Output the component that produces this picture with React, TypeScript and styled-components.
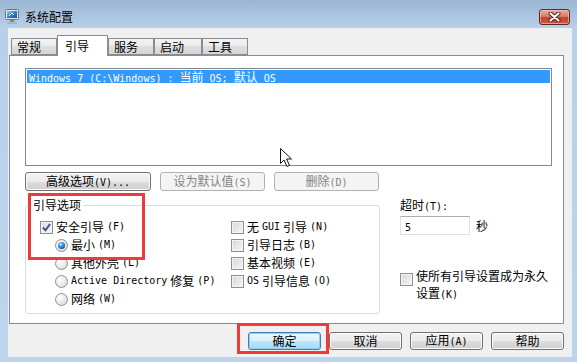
import React from 'react';
import styled, { createGlobalStyle } from 'styled-components';

const GlobalStyle = createGlobalStyle`
  html, body {
    margin: 0;
    padding: 0;
    background: #bdd4ec;
  }
  body {
    font-family: "Noto Sans CJK SC", sans-serif;
    font-size: 12px;
    color: #000;
  }
  * {
    box-sizing: border-box;
  }
`;

// SimSun-like mix: half-width latin runs, full-width CJK runs
const Latin = styled.span`
  font-family: "DejaVu Sans Mono", "Liberation Mono", monospace;
  font-size: 10px;
`;

function Txt({ children }: { children: string }) {
  const parts = children.split(/([\x20-\x7e]+)/).filter(Boolean);
  return (
    <>
      {parts.map((p, i) =>
        /^[\x20-\x7e]+$/.test(p) ? <Latin key={i}>{p}</Latin> : <span key={i}>{p}</span>
      )}
    </>
  );
}

export default function App() {
  return (
    <>
      <GlobalStyle />
      <Window>
        <TitleBar>
          <AppIcon width="14" height="15" viewBox="0 0 14 15">
            <defs>
              <linearGradient id="scr" x1="0" y1="0" x2="1" y2="1">
                <stop offset="0" stopColor="#9fd3f7" />
                <stop offset="0.5" stopColor="#2f83d6" />
                <stop offset="1" stopColor="#1a4f9c" />
              </linearGradient>
            </defs>
            <rect x="0.5" y="0.5" width="13" height="10" rx="1" fill="#dfe4ea" stroke="#6b7889" />
            <rect x="2" y="2" width="10" height="7" fill="url(#scr)" />
            <path d="M4 7 L7 4 L9 6" stroke="#ffffff" strokeWidth="1" fill="none" />
            <rect x="5" y="11" width="4" height="2" fill="#7f8a98" />
            <rect x="2" y="13" width="10" height="2" rx="0.5" fill="#a9b3bf" />
          </AppIcon>
          <Title>系统配置</Title>
          <Spacer />
          <CloseButton>
            <svg width="13" height="10" viewBox="0 0 13 10">
              <path d="M2.5 1.5 L10.5 8.5 M10.5 1.5 L2.5 8.5" stroke="#4a1e18" strokeWidth="4" strokeLinecap="round" />
              <path d="M2.5 1.5 L10.5 8.5 M10.5 1.5 L2.5 8.5" stroke="#ffffff" strokeWidth="2.2" strokeLinecap="round" />
            </svg>
          </CloseButton>
        </TitleBar>

        <Client>
          <TabStrip>
            <Tab $w={46}>常规</Tab>
            <Tab $w={51} $active>引导</Tab>
            <Tab $w={46}>服务</Tab>
            <Tab $w={48}>启动</Tab>
            <Tab $w={46}>工具</Tab>
          </TabStrip>

          <Panel>
            <ListBox>
              <ListRow>
                <Txt>Windows 7 (C:\Windows) : 当前 OS; 默认 OS</Txt>
              </ListRow>
            </ListBox>

            <ButtonRow>
              <Button $w={126}>
                <Txt>高级选项(V)...</Txt>
              </Button>
              <Button $w={105} disabled>
                <Txt>设为默认值(S)</Txt>
              </Button>
              <Button $w={105} disabled>
                <Txt>删除(D)</Txt>
              </Button>
            </ButtonRow>

            <Lower>
              <Group>
                <Legend>引导选项</Legend>
                <Columns>
                  <Column $w={191}>
                    <OptionRow>
                      <CheckBox $checked />
                      <Txt>安全引导(F)</Txt>
                    </OptionRow>
                    <OptionRow $indent>
                      <Radio $checked />
                      <Txt>最小(M)</Txt>
                    </OptionRow>
                    <OptionRow $indent>
                      <Radio />
                      <Txt>其他外壳(L)</Txt>
                    </OptionRow>
                    <OptionRow $indent>
                      <Radio />
                      <Txt>Active Directory 修复(P)</Txt>
                    </OptionRow>
                    <OptionRow $indent>
                      <Radio />
                      <Txt>网络(W)</Txt>
                    </OptionRow>
                  </Column>
                  <Column>
                    <OptionRow>
                      <CheckBox />
                      <Txt>无 GUI 引导(N)</Txt>
                    </OptionRow>
                    <OptionRow>
                      <CheckBox />
                      <Txt>引导日志(B)</Txt>
                    </OptionRow>
                    <OptionRow>
                      <CheckBox />
                      <Txt>基本视频(E)</Txt>
                    </OptionRow>
                    <OptionRow>
                      <CheckBox />
                      <Txt>OS 引导信息(O)</Txt>
                    </OptionRow>
                  </Column>
                </Columns>
              </Group>

              <SideArea>
                <FieldLabel>
                  <Txt>超时(T):</Txt>
                </FieldLabel>
                <InputRow>
                  <TextInput>
                    <Latin>5</Latin>
                  </TextInput>
                  <Unit>秒</Unit>
                </InputRow>
                <PermanentRow>
                  <CheckBox />
                  <PermanentText>
                    <TextLine>使所有引导设置成为永久</TextLine>
                    <TextLine>
                      <Txt>设置(K)</Txt>
                    </TextLine>
                  </PermanentText>
                </PermanentRow>
              </SideArea>
            </Lower>
          </Panel>

          <DialogButtons>
            <Button $w={73} $h={18} $default>确定</Button>
            <Button $w={73} $h={18}>取消</Button>
            <Button $w={73} $h={18}>
              <Txt>应用(A)</Txt>
            </Button>
            <Button $w={73} $h={18}>帮助</Button>
          </DialogButtons>
        </Client>

        <Highlight style={{ left: 28, top: 193, width: 117, height: 67 }} />
        <Highlight style={{ left: 237, top: 323, width: 92, height: 31 }} />

        <Cursor width="14" height="21" viewBox="0 0 14 21">
          <path d="M1.5 1.5 L1.5 16.5 L5 13 L8 19.5 L10.5 18.3 L7.6 12 L12.5 12 Z" fill="#ffffff" stroke="#111111" strokeWidth="1" strokeLinejoin="round" />
        </Cursor>
      </Window>
    </>
  );
}

const Window = styled.div`
  position: relative;
  width: 577px;
  height: 362px;
  display: flex;
  flex-direction: column;
  background: linear-gradient(to bottom, #9ab6d4 0px, #b8d0e9 28px, #bdd4ec 100%);
  overflow: hidden;
`;

const TitleBar = styled.div`
  height: 28px;
  flex: none;
  display: flex;
  align-items: flex-end;
  padding: 0 7px 3px 5px;
`;

const AppIcon = styled.svg`
  flex: none;
  margin-bottom: 1px;
`;

const Title = styled.span`
  margin-left: 6px;
  font-size: 12px;
  line-height: 16px;
  color: #000;
`;

const Spacer = styled.div`
  flex: 1;
`;

const CloseButton = styled.div`
  width: 31px;
  height: 16px;
  border: 1px solid #5b2a24;
  border-radius: 3px;
  display: flex;
  align-items: center;
  justify-content: center;
  background: linear-gradient(to bottom, #e9a99b 0%, #d7806f 45%, #c2412f 55%, #cd5b3e 100%);
  box-shadow: inset 0 0 0 1px rgba(255, 220, 210, 0.5);
`;

const Client = styled.div`
  flex: 1;
  margin: 0 5px 5px 8px;
  background: #f0f0f0;
  display: flex;
  flex-direction: column;
  padding: 7px 8px 0 1px;
`;

const TabStrip = styled.div`
  height: 20px;
  display: flex;
  align-items: flex-end;
  padding-left: 2px;
  position: relative;
  z-index: 1;
`;

const Tab = styled.div<{ $w: number; $active?: boolean }>`
  width: ${(p) => p.$w}px;
  height: ${(p) => (p.$active ? 21 : 17)}px;
  margin-bottom: ${(p) => (p.$active ? -1 : 0)}px;
  border: 1px solid #898c95;
  border-bottom: ${(p) => (p.$active ? 'none' : '1px solid #898c95')};
  background: ${(p) =>
    p.$active ? '#ffffff' : 'linear-gradient(to bottom, #f3f3f3 0%, #ebebeb 50%, #dfdfdf 50%, #d4d4d4 100%)'};
  padding-left: ${(p) => (p.$active ? 7 : 5)}px;
  padding-top: ${(p) => (p.$active ? 2 : 0)}px;
  font-size: 12px;
  line-height: 15px;
  color: #000;
`;

const Panel = styled.div`
  height: 269px;
  flex: none;
  border: 1px solid #898c95;
  background: #ffffff;
  padding: 12px 0 0 15px;
`;

const ListBox = styled.div`
  width: 527px;
  height: 98px;
  border: 1px solid #828790;
  padding: 1px;
  background: #fff;
`;

const ListRow = styled.div`
  height: 13px;
  background: #3399ff;
  color: #ffffff;
  padding-left: 2px;
  font-size: 12px;
  line-height: 13px;
  white-space: nowrap;
`;

const ButtonRow = styled.div`
  display: flex;
  gap: 9px;
  margin-top: 6px;
`;

const Button = styled.button<{ $w: number; $h?: number; $default?: boolean }>`
  width: ${(p) => p.$w}px;
  height: ${(p) => p.$h ?? 19}px;
  padding: 0;
  margin: 0;
  border: 1px solid ${(p) => (p.$default ? '#3c7fb1' : '#707070')};
  border-radius: 3px;
  font-family: "Noto Sans CJK SC", sans-serif;
  font-size: 12px;
  line-height: 14px;
  color: #000;
  background: ${(p) =>
    p.$default
      ? 'linear-gradient(to bottom, #eaf6fd 0%, #d9f0fc 50%, #bee6fd 50%, #a7d9f5 100%)'
      : 'linear-gradient(to bottom, #f2f2f2 0%, #ebebeb 50%, #dddddd 50%, #cfcfcf 100%)'};
  box-shadow: ${(p) => (p.$default ? 'inset 0 0 0 1px #8ed0f2' : 'inset 0 0 0 1px #fcfcfc')};

  &:disabled {
    border-color: #adb2b5;
    background: #f4f4f4;
    color: #838383;
    box-shadow: none;
  }
`;

const Lower = styled.div`
  display: flex;
  align-items: flex-start;
  margin-top: 7px;
`;

const Group = styled.fieldset`
  width: 355px;
  margin: 0;
  border: 1px solid #d5dfe5;
  border-radius: 3px;
  padding: 6px 0 5px 5px;
`;

const Legend = styled.legend`
  padding: 0 2px;
  font-size: 12px;
  line-height: 14px;
  color: #000;
`;

const Columns = styled.div`
  display: flex;
  padding-left: 9px;
`;

const Column = styled.div<{ $w?: number }>`
  display: flex;
  flex-direction: column;
  width: ${(p) => (p.$w ? `${p.$w}px` : 'auto')};
`;

const OptionRow = styled.div<{ $indent?: boolean }>`
  height: 18px;
  display: flex;
  align-items: center;
  gap: 3px;
  padding-left: ${(p) => (p.$indent ? 15 : 0)}px;
  font-size: 12px;
  line-height: 14px;
  white-space: nowrap;
`;

const CheckBox = styled.span<{ $checked?: boolean }>`
  flex: none;
  width: 13px;
  height: 13px;
  border: 1px solid #8e8f8f;
  background: ${(p) =>
    p.$checked
      ? `url("data:image/svg+xml,%3Csvg xmlns='http://www.w3.org/2000/svg' width='11' height='11'%3E%3Cpath d='M2 5.5 L4.5 8.3 L9 2' stroke='%233b4f8c' stroke-width='1.9' fill='none'/%3E%3C/svg%3E") center / 11px 11px no-repeat, linear-gradient(135deg, #d9dde3 0%, #f7f7f7 100%)`
      : 'linear-gradient(135deg, #d3d7dd 0%, #f6f6f6 100%)'};
  box-shadow: inset 0 0 0 1px #f4f4f4;
`;

const Radio = styled.span<{ $checked?: boolean }>`
  flex: none;
  position: relative;
  width: 13px;
  height: 13px;
  border-radius: 50%;
  border: 1px solid #8f8f8f;
  background: radial-gradient(circle at 35% 35%, #ffffff 0%, #e6e8eb 55%, #c9ced4 100%);

  &::after {
    content: '';
    display: ${(p) => (p.$checked ? 'block' : 'none')};
    position: absolute;
    left: 2px;
    top: 2px;
    width: 7px;
    height: 7px;
    border-radius: 50%;
    background: radial-gradient(circle at 40% 35%, #c8ecff 0%, #3c9be3 35%, #10509a 75%, #0b3a75 100%);
  }
`;

const SideArea = styled.div`
  margin-left: 20px;
  display: flex;
  flex-direction: column;
`;

const FieldLabel = styled.div`
  font-size: 12px;
  line-height: 14px;
`;

const InputRow = styled.div`
  display: flex;
  align-items: center;
  margin-top: 2px;
`;

const TextInput = styled.div`
  width: 70px;
  height: 19px;
  border: 1px solid #dbdfe6;
  border-top-color: #abadb3;
  border-left-color: #e2e3ea;
  background: #fff;
  padding-left: 4px;
  line-height: 17px;
`;

const Unit = styled.span`
  margin-left: 6px;
  font-size: 12px;
  line-height: 14px;
`;

const PermanentRow = styled.div`
  display: flex;
  align-items: flex-start;
  gap: 3px;
  margin-top: 38px;
`;

const PermanentText = styled.div`
  display: flex;
  flex-direction: column;
  margin-top: -6px;
`;

const TextLine = styled.div`
  font-size: 12px;
  line-height: 17px;
  white-space: nowrap;
`;

const DialogButtons = styled.div`
  display: flex;
  justify-content: flex-end;
  gap: 8px;
  margin-top: 8px;
`;

const Highlight = styled.div`
  position: absolute;
  border: 3px solid #f03a3a;
  pointer-events: none;
  z-index: 5;
`;

const Cursor = styled.svg`
  position: absolute;
  left: 279px;
  top: 147px;
  z-index: 6;
`;
